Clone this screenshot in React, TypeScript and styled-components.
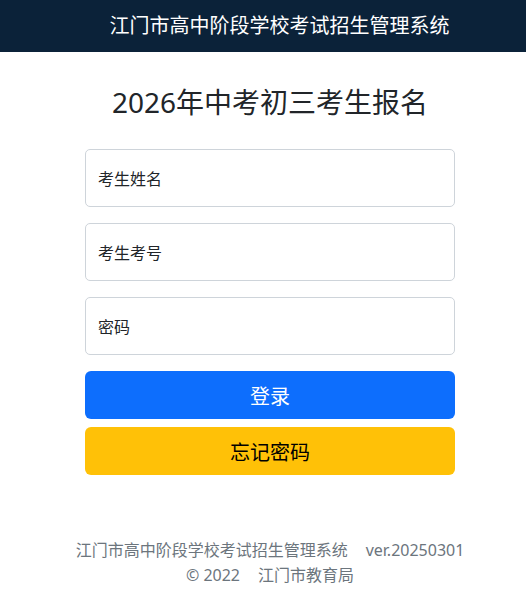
import React from "react";
import styled, { createGlobalStyle } from "styled-components";

const Global = createGlobalStyle`
  html, body { margin: 0; padding: 0; background: #fff; }
  body {
    font-family: "Segoe UI", "Noto Sans", "Noto Sans CJK SC", sans-serif;
    color: #212529;
  }
  * { box-sizing: border-box; }
`;

const Header = styled.header`
  height: 52px;
  background: #0b2239;
  color: #fff;
  display: flex;
  align-items: center;
  justify-content: center;
  padding-left: 33px;
  font-size: 20px;
  line-height: 1;
`;

const Main = styled.main`
  display: flex;
  flex-direction: column;
  align-items: center;
  padding-left: 14px;
`;

const Title = styled.h1`
  margin: 30px 0 0;
  height: 40px;
  font-size: 28px;
  font-weight: 400;
  line-height: 40px;
  color: #212529;
`;

const Form = styled.form`
  width: 370px;
  margin-top: 27px;
  display: flex;
  flex-direction: column;
`;

const Field = styled.div`
  height: 58px;
  border: 1px solid #ced4da;
  border-radius: 5px;
  display: flex;
  align-items: center;
  padding: 0 12px;
  font-size: 16px;
  color: #212529;
  margin-bottom: 16px;
`;

const Button = styled.button<{ $variant: "primary" | "warning" }>`
  height: 48px;
  border: none;
  border-radius: 6px;
  font-family: inherit;
  font-size: 20px;
  background: ${(p) => (p.$variant === "primary" ? "#0d6efd" : "#ffc107")};
  color: ${(p) => (p.$variant === "primary" ? "#fff" : "#000")};
  margin-top: ${(p) => (p.$variant === "primary" ? "0" : "8px")};
  cursor: pointer;
`;

const Footer = styled.footer`
  margin-top: 63px;
  display: flex;
  flex-direction: column;
  align-items: center;
  color: #6c757d;
  font-size: 16px;
  line-height: 25px;
`;

const Gap = styled.span`
  display: inline-block;
  width: 18px;
`;

export default function App() {
  return (
    <>
      <Global />
      <Header>江门市高中阶段学校考试招生管理系统</Header>
      <Main>
        <Title>2026年中考初三考生报名</Title>
        <Form onSubmit={(e) => e.preventDefault()}>
          <Field>考生姓名</Field>
          <Field>考生考号</Field>
          <Field>密码</Field>
          <Button type="submit" $variant="primary">登录</Button>
          <Button type="button" $variant="warning">忘记密码</Button>
        </Form>
        <Footer>
          <div>
            江门市高中阶段学校考试招生管理系统<Gap />ver.20250301
          </div>
          <div>
            © 2022<Gap />江门市教育局
          </div>
        </Footer>
      </Main>
    </>
  );
}
